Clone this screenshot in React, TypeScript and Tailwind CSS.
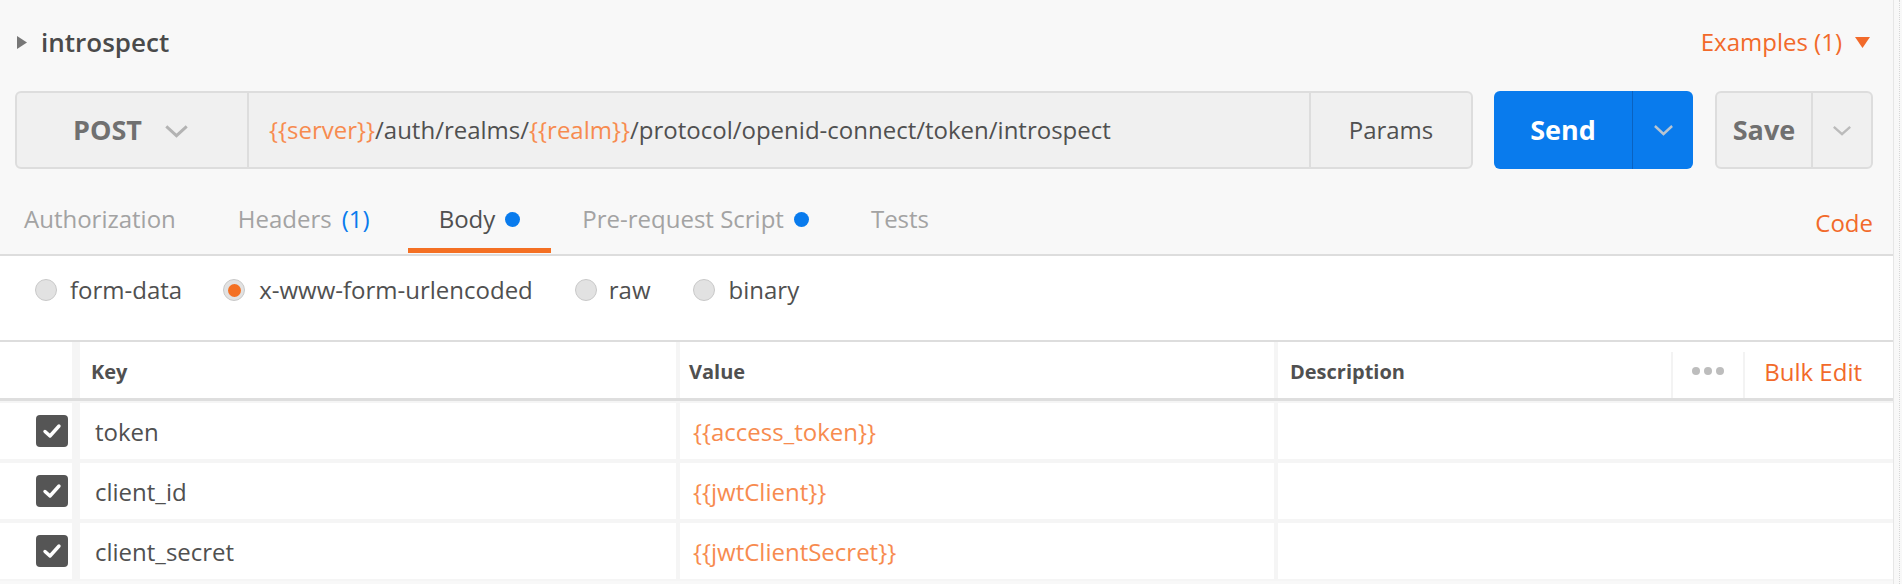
import React from "react";

const Chevron = ({ color, w = 22, h = 12 }: { color: string; w?: number; h?: number }) => (
  <svg width={w} height={h} viewBox="0 0 22 12" fill="none" preserveAspectRatio="none">
    <polyline points="2,2 11,10 20,2" stroke={color} strokeWidth="2.6" fill="none" />
  </svg>
);

const Radio = ({ checked }: { checked?: boolean }) => (
  <span className="flex h-[22px] w-[22px] items-center justify-center rounded-full border border-[#c9c9c9] bg-[#e2e2e2]">
    {checked && <span className="h-[13px] w-[13px] rounded-full bg-[#f47023]" />}
  </span>
);

const Check = () => (
  <span className="flex h-[32px] w-[32px] items-center justify-center rounded-[4px] bg-[#555555]">
    <svg width="20" height="16" viewBox="0 0 20 16" fill="none">
      <polyline points="3,8.5 8,13 17,3" stroke="#ffffff" strokeWidth="3.4" fill="none" strokeLinecap="round" strokeLinejoin="round" />
    </svg>
  </span>
);

const Var = ({ children }: { children: React.ReactNode }) => <span className="text-[#f78b4f]">{children}</span>;

const rows = [
  { key: "token", value: "{{access_token}}" },
  { key: "client_id", value: "{{jwtClient}}" },
  { key: "client_secret", value: "{{jwtClientSecret}}" },
];

const tabs = [
  { label: "Authorization", pad: "pl-[24px] pr-[31px]" },
  { label: "Headers", count: "(1)", pad: "pl-[31px] pr-[38px]" },
  { label: "Body", dot: true, active: true, pad: "px-[31px]" },
  { label: "Pre-request Script", dot: true, pad: "px-[31px]" },
  { label: "Tests", pad: "px-[31px]" },
];

export default function App() {
  return (
    <div className="flex h-[584px] w-[1902px] overflow-hidden bg-[#f8f8f8] font-['Open_Sans',sans-serif] text-[24px] text-[#505050]">
      <div className="flex w-[1893px] flex-col">
        {/* header */}
        <div className="flex h-[84px] items-center justify-between pl-[17px] pr-[23px]">
          <div className="flex items-center">
            <svg width="10" height="13" viewBox="0 0 10 13">
              <polygon points="0,0 10,6.5 0,13" fill="#777777" />
            </svg>
            <span className="ml-[14px] text-[26px] font-semibold leading-none text-[#4a4a4a]">introspect</span>
          </div>
          <div className="flex items-center text-[#f26a2a]">
            <span className="leading-none">Examples (1)</span>
            <svg className="ml-[13px]" width="15" height="11" viewBox="0 0 15 11">
              <polygon points="0,0 15,0 7.5,11" fill="#f26a2a" />
            </svg>
          </div>
        </div>

        {/* url row */}
        <div className="mt-[7px] flex h-[78px] pl-[15px]">
          <div className="flex w-[1458px] overflow-hidden rounded-[6px] border-2 border-[#dddddd] bg-[#f0f0f0]">
            <div className="flex w-[232px] items-center border-r-2 border-[#dddddd] pl-[56px]">
              <span className="text-[27px] font-bold text-[#707070]">POST</span>
              <span className="ml-[22px] mt-[2px] flex">
                <Chevron color="#b3b3b3" w={25} h={14} />
              </span>
            </div>
            <div className="flex flex-1 items-center pl-[20px] whitespace-nowrap">
              <Var>{"{{server}}"}</Var>
              <span>/auth/realms/</span>
              <Var>{"{{realm}}"}</Var>
              <span>/protocol/openid-connect/token/introspect</span>
            </div>
            <div className="flex w-[162px] items-center justify-center border-l-2 border-[#dddddd]">Params</div>
          </div>
          <div className="ml-[21px] flex w-[199px] overflow-hidden rounded-[6px] bg-[#097bed]">
            <div className="flex w-[139px] items-center justify-center border-r border-[#0a62c0] text-[27px] font-bold text-white">
              Send
            </div>
            <div className="flex flex-1 items-center justify-center">
              <Chevron color="#b8c4d0" w={21} h={12} />
            </div>
          </div>
          <div className="ml-[22px] flex w-[158px] overflow-hidden rounded-[6px] border-2 border-[#dddddd] bg-[#f0f0f0]">
            <div className="flex w-[96px] items-center justify-center border-r-2 border-[#dddddd] text-[27px] font-bold text-[#707070]">
              Save
            </div>
            <div className="flex flex-1 items-center justify-center">
              <Chevron color="#bbbbbb" w={20} h={11} />
            </div>
          </div>
        </div>

        {/* tabs */}
        <div className="flex h-[87px] items-end justify-between border-b-2 border-[#dddddd]">
          <div className="flex items-end">
            {tabs.map((t) => (
              <div key={t.label} className="flex flex-col">
                <div
                  className={`flex h-[30px] items-center whitespace-nowrap ${t.pad} ${t.active ? "text-[#505050]" : "text-[#a3a3a3]"}`}
                >
                  <span>{t.label}</span>
                  {t.count && <span className="ml-[10px] text-[#097bed]">{t.count}</span>}
                  {t.dot && <span className="ml-[10px] h-[15px] w-[15px] rounded-full bg-[#097bed]" />}
                </div>
                <div className={`mt-[14px] h-[5px] ${t.active ? "bg-[#f47023]" : ""}`} />
                <div className="h-[1px]" />
              </div>
            ))}
          </div>
          <div className="mb-[16px] flex h-[30px] items-center pr-[20px] text-[#f26a2a]">Code</div>
        </div>

        {/* body type */}
        <div className="flex h-[84px] items-center bg-white pb-[16px] pl-[35px]">
          <Radio />
          <span className="ml-[13px]">form-data</span>
          <span className="ml-[41px]">
            <Radio checked />
          </span>
          <span className="ml-[14px]">x-www-form-urlencoded</span>
          <span className="ml-[42px]">
            <Radio />
          </span>
          <span className="ml-[12px]">raw</span>
          <span className="ml-[42px]">
            <Radio />
          </span>
          <span className="ml-[14px]">binary</span>
        </div>

        {/* table */}
        <div className="border-t-2 border-[#dddddd] bg-white">
          <div className="flex h-[59px] border-b-[3px] border-[#dedede] text-[20px] font-bold text-[#505050]">
            <div className="w-[72px]" />
            <div className="flex w-[604px] items-center border-l-[8px] border-[#f5f5f5] pl-[11px] pt-[3px]">Key</div>
            <div className="flex w-[598px] items-center border-l-4 border-[#f5f5f5] pl-[9px] pt-[3px]">Value</div>
            <div className="flex flex-1 border-l-4 border-[#f5f5f5]">
              <div className="flex flex-1 items-center pl-[12px] pt-[3px]">Description</div>
              <div className="mt-[10px] flex w-[74px] items-center justify-center border-x-2 border-[#f3f3f3] pb-[8px]">
                <span className="flex gap-[4px]">
                  <span className="h-[8px] w-[8px] rounded-full bg-[#bdbdbd]" />
                  <span className="h-[8px] w-[8px] rounded-full bg-[#bdbdbd]" />
                  <span className="h-[8px] w-[8px] rounded-full bg-[#bdbdbd]" />
                </span>
              </div>
              <div className="flex w-[148px] items-center justify-end pr-[31px] pt-[3px] text-[24px] font-normal text-[#f26a2a]">
                Bulk Edit
              </div>
            </div>
          </div>
          <div className="flex flex-col gap-[4px] bg-[#f5f5f5] py-[2px]">
            {rows.map((r) => (
              <div key={r.key} className="flex h-[56px] bg-white">
                <div className="flex w-[72px] items-center justify-end pr-[4px]">
                  <Check />
                </div>
                <div className="flex w-[604px] items-center border-l-[8px] border-[#f5f5f5] pl-[15px] pt-[2px]">{r.key}</div>
                <div className="flex w-[598px] items-center border-l-4 border-[#f5f5f5] pl-[13px] pt-[2px]">
                  <Var>{r.value}</Var>
                </div>
                <div className="flex-1 border-l-4 border-[#f5f5f5]" />
              </div>
            ))}
          </div>
        </div>
      </div>
      <div className="flex w-[9px] border-l border-[#e6e6e6] bg-[#f8f8f8]">
        <div className="ml-[5px] h-full border-l border-dotted border-[#d6d6d6]" />
      </div>
    </div>
  );
}
